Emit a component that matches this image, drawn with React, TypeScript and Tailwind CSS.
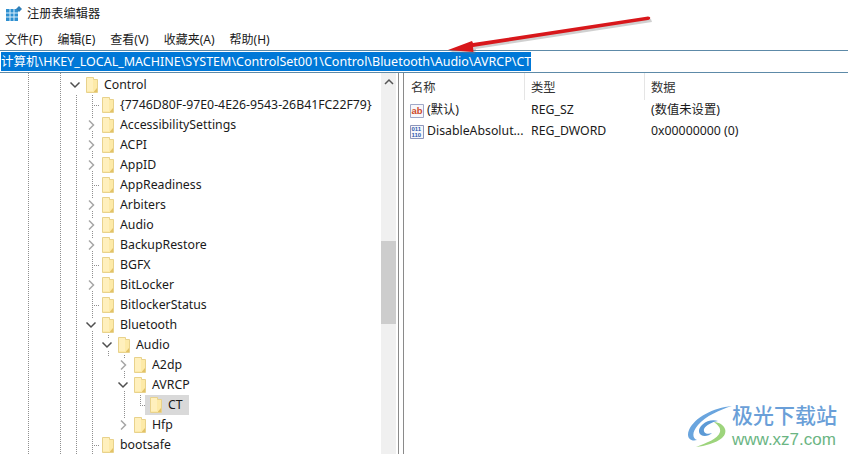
import React from "react";

type Row = { label: string; level: number; state: "open" | "closed" | "none"; selected?: boolean };

const rows: Row[] = [
  { label: "Control", level: 0, state: "open" },
  { label: "{7746D80F-97E0-4E26-9543-26B41FC22F79}", level: 1, state: "none" },
  { label: "AccessibilitySettings", level: 1, state: "closed" },
  { label: "ACPI", level: 1, state: "closed" },
  { label: "AppID", level: 1, state: "closed" },
  { label: "AppReadiness", level: 1, state: "none" },
  { label: "Arbiters", level: 1, state: "closed" },
  { label: "Audio", level: 1, state: "closed" },
  { label: "BackupRestore", level: 1, state: "closed" },
  { label: "BGFX", level: 1, state: "none" },
  { label: "BitLocker", level: 1, state: "closed" },
  { label: "BitlockerStatus", level: 1, state: "none" },
  { label: "Bluetooth", level: 1, state: "open" },
  { label: "Audio", level: 2, state: "open" },
  { label: "A2dp", level: 3, state: "closed" },
  { label: "AVRCP", level: 3, state: "open" },
  { label: "CT", level: 4, state: "none", selected: true },
  { label: "Hfp", level: 3, state: "closed" },
  { label: "bootsafe", level: 1, state: "none" },
];

const indentClass = ["pl-[69px]", "pl-[85px]", "pl-[101px]", "pl-[117px]", "pl-[133px]"];

function Folder() {
  return (
    <svg width="14" height="18" viewBox="0 0 14 18" className="shrink-0">
      <path d="M1.5 1.5H8.5V3.5H12.5V16.5H1.5Z" fill="#fdeaa8" stroke="#e8d28c" />
      <path d="M2 2H8V15H2Z" fill="#fff0bd" />
      <path d="M9 15.5L12 12V16H9Z" fill="#e3c266" />
    </svg>
  );
}

function Chevron({ state }: { state: Row["state"] }) {
  if (state === "none") return null;
  return (
    <svg width="12" height="12" viewBox="0 0 12 12" className="bg-white">
      {state === "open" && <path d="M1.5 3.5L6 8L10.5 3.5" fill="none" stroke="#4f4f4f" strokeWidth="1.5" />}
      {state === "closed" && <path d="M4 1.5L8.5 6L4 10.5" fill="none" stroke="#a6a6a6" strokeWidth="1.5" />}
    </svg>
  );
}

function TreeRow({ row }: { row: Row }) {
  return (
    <div className={`flex h-5 items-center whitespace-nowrap ${indentClass[row.level]}`}>
      <div className="mr-[4px] w-[12px] shrink-0">
        <Chevron state={row.state} />
      </div>
      <div className={`flex h-5 items-center ${row.selected ? "-ml-[4px] bg-[#d9d9d9] pl-[4px] pr-[6px]" : ""}`}>
        <Folder />
        <span className="ml-[5px]">{row.label}</span>
      </div>
    </div>
  );
}

function Guides() {
  const d = [
    "M28.5 0V382",
    "M60.5 0V382",
    "M76.5 22V382",
    "M92.5 22V382",
    "M92 32.5H100",
    "M92 112.5H100",
    "M92 192.5H100",
    "M92 232.5H100",
    "M92 372.5H100",
    "M108.5 262V284",
    "M124.5 282V352",
    "M140.5 322V333",
    "M140 332.5H148",
  ].join(" ");
  return (
    <svg className="pointer-events-none absolute left-0 top-0" width="381" height="382">
      <path d={d} stroke="#8f8f8f" strokeDasharray="1 1" fill="none" />
    </svg>
  );
}

function AbIcon() {
  return (
    <svg width="16" height="16" viewBox="0 0 16 16" className="shrink-0">
      <path d="M1.5 1.5H14.5V14.5H1.5Z" fill="#f7f7fb" stroke="#9fa8c8" />
      <text x="2.5" y="11" fontSize="9.5" fontWeight="700" fill="#cf4a2a" fontFamily="'Liberation Sans', sans-serif">ab</text>
    </svg>
  );
}

function BinIcon() {
  return (
    <svg width="16" height="16" viewBox="0 0 16 16" className="shrink-0">
      <path d="M1.5 1.5H14.5V14.5H1.5Z" fill="#f7f7fb" stroke="#8d96bb" />
      <text x="2.4" y="7.2" fontSize="6" fontWeight="700" fill="#2d5cae" fontFamily="'Liberation Sans', sans-serif">011</text>
      <text x="2.4" y="13.2" fontSize="6" fontWeight="700" fill="#2d5cae" fontFamily="'Liberation Sans', sans-serif">110</text>
    </svg>
  );
}

function ListRow({ icon, name, type, data }: { icon: React.ReactNode; name: string; type: string; data: string }) {
  return (
    <div className="flex h-[21px] items-center">
      <div className="flex w-[121px] items-center gap-[2px] pl-[5px]">
        {icon}
        <span className="whitespace-nowrap">{name}</span>
      </div>
      <div className="w-[120px] pl-[6px]">{type}</div>
      <div className="pl-[6px]">{data}</div>
    </div>
  );
}

function Arrow() {
  return (
    <svg className="pointer-events-none absolute left-[440px] top-[10px]" width="220" height="50" viewBox="440 10 220 50">
      <path d="M650 20L474 47L473 52L448 50L472 41L473 43L649 17Z" fill="#777" opacity="0.35" transform="translate(2 2)" />
      <path d="M648 16.5C651 16.5 651 19.5 648 20L473 47L473.5 52L448 50L472 41L473 43Z" fill="#d8171b" />
    </svg>
  );
}

function Logo() {
  return (
    <div className="absolute bottom-[5px] right-[11px] flex items-center">
      <svg width="45" height="42" viewBox="0 0 45 42">
        <path d="M45 1C26 3 8 12 2 25C-1 32 3 37 10 35C5 33 5 27 11 20C19 11 32 5 45 1Z" fill="#6aa5de" />
        <path d="M31 16C21 13 11 21 12 27C13 32 21 32 25 28C20 30 16 28 17 24C19 20 25 17 31 16Z" fill="#5c9ad6" />
        <path d="M27 17C38 18 42 27 35 33C29 38 18 41 9 42C19 38 31 34 33 27C34 23 31 20 27 17Z" fill="#9dd47c" />
      </svg>
      <div className="flex flex-col items-start gap-[3px]">
        <span className="text-[21px] font-medium leading-[26px] text-[#6a9fd8]">极光下载站</span>
        <span className="font-['Liberation_Sans',sans-serif] text-[17px] leading-[18px] text-[#6bb583]">www.xz7.com</span>
      </div>
    </div>
  );
}

export default function App() {
  return (
    <div className="relative flex h-[454px] w-[848px] flex-col overflow-hidden bg-white font-['Noto_Sans','Noto_Sans_CJK_SC',sans-serif] text-[12.3px] text-[#1a1a1a]">
      <div className="flex h-[28px] items-center pl-[6px]">
        <svg width="16" height="16" viewBox="0 0 16 16">
          <path d="M0 3H12V15H0Z" fill="#2e8fd0" />
          <path d="M4 3V15M8 3V15M0 7H12M0 11H12" stroke="#d8eefb" />
          <path d="M13 0L16 3L13 6L10 3Z" fill="#2f7fb8" />
        </svg>
        <span className="ml-[5px] text-[12.2px]">注册表编辑器</span>
      </div>
      <div className="flex h-[22px] items-center gap-[15px] pl-[5px] pt-[2px] text-[12px]">
        <span>文件(F)</span>
        <span>编辑(E)</span>
        <span>查看(V)</span>
        <span>收藏夹(A)</span>
        <span>帮助(H)</span>
      </div>
      <div className="flex h-[23px] items-center border-y border-y-[#5d8aa8] pl-[1px] text-[12.5px]">
        <span className="whitespace-nowrap bg-[#0078d7] leading-[19px] text-white">
          计算机\HKEY_LOCAL_MACHINE\SYSTEM\ControlSet001\Control\Bluetooth\Audio\AVRCP\CT
        </span>
      </div>
      <div className="flex min-h-0 flex-1">
        <div className="relative h-full w-[381px] overflow-hidden pt-[2px]">
          <Guides />
          <div className="relative">
            {rows.map((r, i) => (
              <TreeRow key={i} row={r} />
            ))}
          </div>
        </div>
        <div className="flex h-full w-[15px] flex-col bg-[#f0f0f0]">
          <div className="flex h-[17px] items-center justify-center">
            <svg width="10" height="8" viewBox="0 0 10 8">
              <path d="M1 6L5 2L9 6" fill="none" stroke="#555" strokeWidth="1.5" />
            </svg>
          </div>
          <div className="mt-[151px] h-[83px] bg-[#cdcdcd]" />
        </div>
        <div className="ml-[2px] h-full w-[6px] border-x border-x-[#8a8a8a]" />
        <div className="min-w-0 flex-1">
          <div className="flex h-[27px] items-center text-[#333]">
            <div className="h-full w-[121px] border-r border-r-[#e5e5e5] pl-[7px] pt-[2px] leading-[26px]">名称</div>
            <div className="h-full w-[120px] border-r border-r-[#e5e5e5] pl-[6px] pt-[2px] leading-[26px]">类型</div>
            <div className="h-full pl-[6px] pt-[2px] leading-[26px]">数据</div>
          </div>
          <ListRow icon={<AbIcon />} name="(默认)" type="REG_SZ" data="(数值未设置)" />
          <ListRow icon={<BinIcon />} name="DisableAbsolut..." type="REG_DWORD" data="0x00000000 (0)" />
        </div>
      </div>
      <Arrow />
      <Logo />
    </div>
  );
}
